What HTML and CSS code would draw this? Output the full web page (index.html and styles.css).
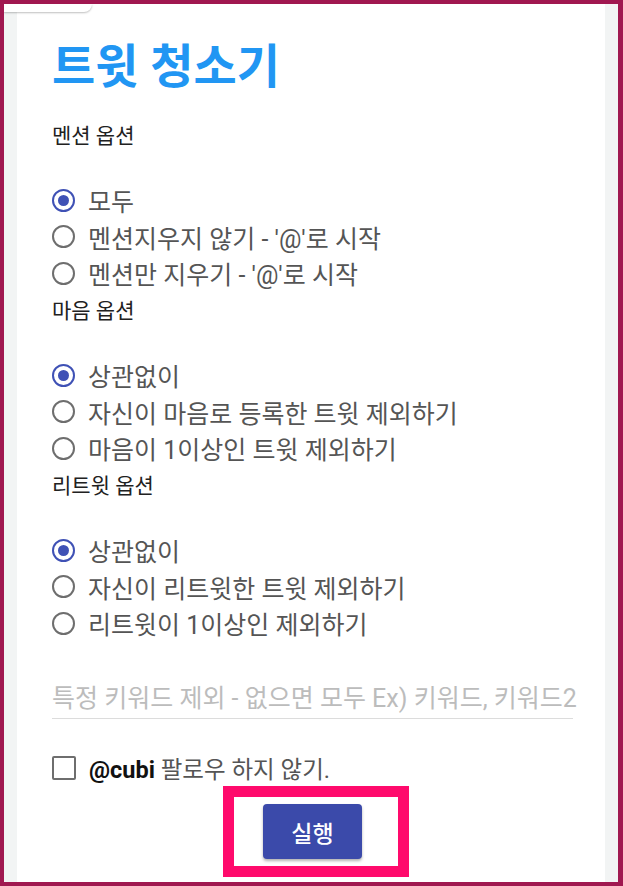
FILE: index.html
```html
<!DOCTYPE html>
<html lang="ko">
<head>
<meta charset="utf-8">
<title>트윗 청소기</title>
<link rel="stylesheet" href="styles.css">
</head>
<body>
<div class="frame">
  <div class="tab"></div>
  <main class="card">
    <h1 class="title">트윗 청소기</h1>

    <div class="section-label">멘션 옵션</div>
    <div class="radio-group">
      <div class="radio-row"><span class="radio checked"></span><span class="radio-text">모두</span></div>
      <div class="radio-row"><span class="radio"></span><span class="radio-text">멘션지우지 않기 - '@'로 시작</span></div>
      <div class="radio-row"><span class="radio"></span><span class="radio-text">멘션만 지우기 - '@'로 시작</span></div>
    </div>

    <div class="section-label">마음 옵션</div>
    <div class="radio-group">
      <div class="radio-row"><span class="radio checked"></span><span class="radio-text">상관없이</span></div>
      <div class="radio-row"><span class="radio"></span><span class="radio-text">자신이 마음로 등록한 트윗 제외하기</span></div>
      <div class="radio-row"><span class="radio"></span><span class="radio-text">마음이 1이상인 트윗 제외하기</span></div>
    </div>

    <div class="section-label">리트윗 옵션</div>
    <div class="radio-group">
      <div class="radio-row"><span class="radio checked"></span><span class="radio-text">상관없이</span></div>
      <div class="radio-row"><span class="radio"></span><span class="radio-text">자신이 리트윗한 트윗 제외하기</span></div>
      <div class="radio-row"><span class="radio"></span><span class="radio-text">리트윗이 1이상인 제외하기</span></div>
    </div>

    <div class="field">
      <div class="placeholder">특정 키워드 제외 - 없으면 모두 Ex) 키워드, 키워드2</div>
    </div>

    <div class="check-row">
      <span class="checkbox"></span>
      <span class="check-text"><b class="handle">@cubi</b> 팔로우 하지 않기.</span>
    </div>

    <div class="actions">
      <div class="highlight">
        <button class="run-btn" type="button">실행</button>
      </div>
    </div>
  </main>
</div>
</body>
</html>
```

FILE: styles.css
```css
* { box-sizing: border-box; }

html, body {
  margin: 0;
  padding: 0;
  width: 623px;
  height: 886px;
  overflow: hidden;
  background: #a01850;
}

body {
  font-family: "Roboto", "Noto Sans CJK KR", sans-serif;
}

.frame {
  position: relative;
  width: 623px;
  height: 886px;
  border-top: 4px solid #a01850;
  border-left: 4px solid #a01850;
  border-right: 5px solid #a01850;
  border-bottom: 4px solid #a01850;
  background: #f2f4f4;
  padding: 0 13px 0 13px;
  overflow: hidden;
}

.tab {
  position: absolute;
  left: 0;
  top: 0;
  width: 88px;
  height: 8px;
  background: #fff;
  border-radius: 0 0 8px 0;
  box-shadow: 0 1px 2px rgba(0,0,0,0.25);
  z-index: 2;
}

.card {
  background: #fff;
  height: 100%;
  padding: 33px 32px 0 35px;
  display: flex;
  flex-direction: column;
}

.title {
  margin: 0;
  font-size: 47px;
  line-height: 60px;
  height: 60px;
  font-weight: 700;
  color: #2196f3;
}

.section-label {
  height: 36px;
  line-height: 36px;
  font-size: 21px;
  color: #212121;
}

.title + .section-label {
  margin-top: 21px;
}

.radio-group + .section-label {
  margin-top: 1.75px;
}

.radio-group {
  display: flex;
  flex-direction: column;
  padding-top: 27.75px;
}

.radio-row {
  height: 36.5px;
  display: flex;
  align-items: center;
  gap: 13px;
}

.radio {
  width: 23px;
  height: 23px;
  border-radius: 50%;
  border: 2.75px solid #6e6e6e;
  display: flex;
  align-items: center;
  justify-content: center;
  flex: none;
}

.radio.checked {
  border-color: #3f51b5;
}

.radio.checked::after {
  content: "";
  width: 11px;
  height: 11px;
  border-radius: 50%;
  background: #3f51b5;
}

.radio-text {
  font-size: 25px;
  color: #555;
  white-space: nowrap;
}

.field {
  margin-top: 34px;
  height: 44px;
  border-bottom: 1px solid #dcdcdc;
  display: flex;
  align-items: center;
  padding-bottom: 2px;
}

.placeholder {
  font-size: 25px;
  color: #bcbcbc;
  white-space: nowrap;
}

.check-row {
  margin-top: 34px;
  display: flex;
  align-items: center;
  gap: 13px;
  height: 30px;
}

.checkbox {
  width: 24px;
  height: 24px;
  border: 2.75px solid #6e6e6e;
  border-radius: 2px;
  flex: none;
}

.check-text {
  font-size: 23.5px;
  color: #555;
}

.handle {
  color: #111;
  font-weight: 700;
}

.actions {
  display: flex;
  justify-content: center;
  margin-top: 3px;
  padding-left: 6px;
}

.highlight {
  border: 11px solid #ff0a6c;
  background: #fff;
  width: 186px;
  height: 91px;
  display: flex;
  align-items: center;
  justify-content: center;
}

.run-btn {
  width: 99px;
  height: 55px;
  border: none;
  border-radius: 4px;
  background: #3b4aaa;
  color: #fff;
  font-family: "Roboto", "Noto Sans CJK KR", sans-serif;
  font-size: 23px;
  font-weight: 500;
  box-shadow: 0 2px 3px rgba(0,0,0,0.3);
  margin-right: 6px;
}
```
